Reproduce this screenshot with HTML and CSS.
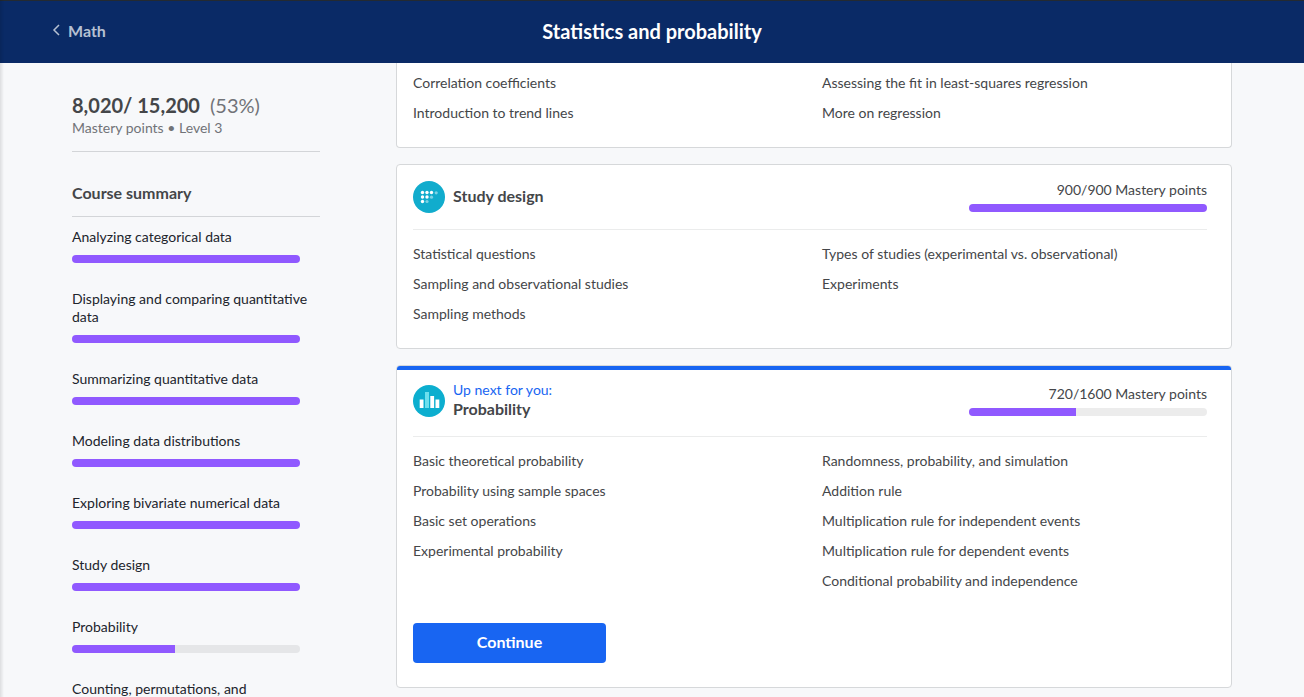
FILE: index.html
```html
<!DOCTYPE html>
<html lang="en">
<head>
<meta charset="utf-8">
<title>Statistics and probability</title>
<link rel="stylesheet" href="styles.css">
</head>
<body>
<header class="topbar">
  <a class="back" href="#">
    <svg class="back-icon" viewBox="0 0 8 12" aria-hidden="true"><path d="M7 1L2 6L7 11"/></svg>
    <span>Math</span>
  </a>
  <h1 class="title">Statistics and probability</h1>
</header>
<div class="page">
  <aside class="sidebar">
    <div class="score">
      <p class="score-total"><strong>8,020/ 15,200</strong><span>(53%)</span></p>
      <p class="score-level">Mastery points • Level 3</p>
    </div>
    <h2 class="summary-title">Course summary</h2>
    <nav class="units">
      <a class="unit" href="#">Analyzing categorical data<span class="bar"><span class="fill" style="width:100%"></span></span></a>
      <a class="unit" href="#">Displaying and comparing quantitative data<span class="bar"><span class="fill" style="width:100%"></span></span></a>
      <a class="unit" href="#">Summarizing quantitative data<span class="bar"><span class="fill" style="width:100%"></span></span></a>
      <a class="unit" href="#">Modeling data distributions<span class="bar"><span class="fill" style="width:100%"></span></span></a>
      <a class="unit" href="#">Exploring bivariate numerical data<span class="bar"><span class="fill" style="width:100%"></span></span></a>
      <a class="unit" href="#">Study design<span class="bar"><span class="fill" style="width:100%"></span></span></a>
      <a class="unit" href="#">Probability<span class="bar"><span class="fill" style="width:45%"></span></span></a>
      <a class="unit" href="#">Counting, permutations, and combinations<span class="bar"><span class="fill" style="width:0%"></span></span></a>
    </nav>
  </aside>
  <main class="cards">
    <section class="card card-continued">
      <div class="topics topics-continued">
        <div class="column">
          <a href="#">Correlation coefficients</a>
          <a href="#">Introduction to trend lines</a>
        </div>
        <div class="column">
          <a href="#">Assessing the fit in least-squares regression</a>
          <a href="#">More on regression</a>
        </div>
      </div>
    </section>
    <section class="card">
      <div class="card-head">
        <svg class="badge" viewBox="0 0 32 32" aria-hidden="true">
          <circle cx="16" cy="16" r="16" fill="#11accd"/>
          <g fill="#fff">
            <circle cx="9.500" cy="11.500" r="1.700"/><circle cx="14" cy="11.500" r="1.700"/><circle cx="18.500" cy="11.500" r="1.700"/>
            <circle cx="9.500" cy="16" r="1.700"/><circle cx="14" cy="16" r="1.700"/>
            <circle cx="9.500" cy="20.500" r="1.700"/>
          </g>
          <g fill="#fff" fill-opacity=".45">
            <circle cx="23.200" cy="11.800" r="1.600"/><circle cx="18.500" cy="16.200" r="1.600"/><circle cx="14" cy="20.500" r="1.600"/>
          </g>
        </svg>
        <h3 class="card-title">Study design</h3>
        <div class="mastery">900/900 Mastery points<span class="bar"><span class="fill" style="width:100%"></span></span></div>
      </div>
      <div class="topics">
        <div class="column">
          <a href="#">Statistical questions</a>
          <a href="#">Sampling and observational studies</a>
          <a href="#">Sampling methods</a>
        </div>
        <div class="column">
          <a href="#">Types of studies (experimental vs. observational)</a>
          <a href="#">Experiments</a>
        </div>
      </div>
    </section>
    <section class="card card-next">
      <div class="card-head">
        <svg class="badge" viewBox="0 0 32 32" aria-hidden="true">
          <circle cx="16" cy="16" r="16" fill="#0caecf"/>
          <path fill="#fff" d="M6.700 14.500h3.800V23H6.700zM17.300 11h3.800v12h-3.800zM22.500 14.500h3.800V23h-3.800z"/>
          <path fill="#6de0ee" d="M12 7h4v16h-4z"/>
        </svg>
        <div class="card-title"><p class="next-label">Up next for you:</p><h3>Probability</h3></div>
        <div class="mastery">720/1600 Mastery points<span class="bar"><span class="fill" style="width:45%"></span></span></div>
      </div>
      <div class="topics">
        <div class="column">
          <a href="#">Basic theoretical probability</a>
          <a href="#">Probability using sample spaces</a>
          <a href="#">Basic set operations</a>
          <a href="#">Experimental probability</a>
        </div>
        <div class="column">
          <a href="#">Randomness, probability, and simulation</a>
          <a href="#">Addition rule</a>
          <a href="#">Multiplication rule for independent events</a>
          <a href="#">Multiplication rule for dependent events</a>
          <a href="#">Conditional probability and independence</a>
        </div>
      </div>
      <button class="continue" type="button">Continue</button>
    </section>
  </main>
</div>
</body>
</html>
```
FILE: styles.css
```css
* {
  box-sizing: border-box;
}

body {
  display: flex;
  flex-direction: column;
  height: 100vh;
  margin: 0;
  overflow: hidden;
  background: #f7f8fa;
  color: #444649;
  font: 14px/18px Lato, "Noto Sans", sans-serif;
}

/* Soft shade along the left edge of the window */
body::before {
  content: "";
  position: fixed;
  z-index: 1;
  inset: 0 auto 0 0;
  width: 4px;
  background: linear-gradient(to right, rgba(0, 0, 0, 0.1), rgba(0, 0, 0, 0));
}

h1,
h2,
h3,
p {
  margin: 0;
}

a {
  color: inherit;
  text-decoration: none;
}

.topbar {
  display: grid;
  grid-template-columns: 1fr auto 1fr;
  align-items: center;
  flex: none;
  height: 63px;
  padding: 0 52px 3px;
  border-top: 1px solid #242a31;
  background: #0a2a66;
  color: #fff;
}

.back {
  display: flex;
  align-items: center;
  gap: 8px;
  color: #b6c0d2;
  font-size: 16px;
  font-weight: 700;
  line-height: 20px;
}

.back-icon {
  width: 8px;
  height: 12px;
  margin-bottom: 2px;
  fill: none;
  stroke: currentColor;
  stroke-width: 1.500;
}

.title {
  font-size: 20px;
  font-weight: 700;
  line-height: 24px;
}

.page {
  display: flex;
  flex: 1;
  gap: 76px;
  min-height: 0;
  padding: 0 72px;
}

.sidebar {
  flex: none;
  width: 248px;
  padding-top: 30px;
}

.score {
  padding-bottom: 14px;
  border-bottom: 1px solid #d3d5d8;
  color: #717378;
}

.score-total {
  display: flex;
  gap: 10px;
  padding-bottom: 2px;
  font-size: 20px;
  line-height: 24px;
}

.score-total strong {
  color: #444649;
}

.summary-title {
  padding: 31px 0 13px;
  border-bottom: 1px solid #d3d5d8;
  font-size: 16px;
  line-height: 20px;
}

.units {
  display: grid;
  gap: 27px;
  padding-top: 11px;
}

.unit {
  color: #21242c;
}

.bar {
  display: block;
  height: 8px;
  overflow: hidden;
  border-radius: 4px;
  background: #e5e6e8;
}

.fill {
  display: block;
  height: 100%;
  background: #9059ff;
}

.unit .bar {
  margin: 9px 20px 0 0;
}

.cards {
  display: flex;
  flex: 1;
  flex-direction: column;
  gap: 16px;
}

.card {
  flex: none;
  padding: 16px 24px 24px 16px;
  border: 1px solid #d6d8da;
  border-radius: 4px;
  background: #fff;
}

.card-continued {
  padding-top: 0;
  border-top: 0;
  border-radius: 0 0 4px 4px;
}

.card-head {
  display: flex;
  align-items: center;
  gap: 8px;
  padding-bottom: 16px;
  border-bottom: 1px solid #ebecec;
}

.badge {
  flex: none;
  width: 32px;
  height: 32px;
}

.card-title {
  flex: 1;
  padding-bottom: 2px;
  font-size: 16px;
  line-height: 20px;
}

.card-title h3 {
  font-size: 16px;
}

.next-label {
  color: #1865f2;
  font-size: 14px;
  line-height: 18px;
}

.mastery {
  width: 30%;
  padding-bottom: 1px;
  text-align: right;
}

.mastery .bar {
  margin-top: 5px;
  background: #ececec;
}

.topics {
  display: grid;
  grid-template-columns: 1fr 1fr;
  gap: 24px;
  padding: 15px 0 1px;
}

.topics-continued {
  padding-top: 11px;
}

.column {
  display: flex;
  flex-direction: column;
  align-items: flex-start;
  gap: 12px;
}

.card-next {
  position: relative;
  padding-top: 15px;
}

.card-next::before {
  content: "";
  position: absolute;
  inset: 0 0 auto;
  height: 4px;
  border-radius: 3px 3px 0 0;
  background: #1865f2;
}

.card-next .card-head {
  padding-bottom: 15px;
}

.continue {
  width: 193px;
  height: 40px;
  margin-top: 32px;
  padding: 0 0 2px;
  border: 0;
  border-radius: 4px;
  background: #1865f2;
  color: #fff;
  font: 700 16px/20px Lato, "Noto Sans", sans-serif;
}
```
